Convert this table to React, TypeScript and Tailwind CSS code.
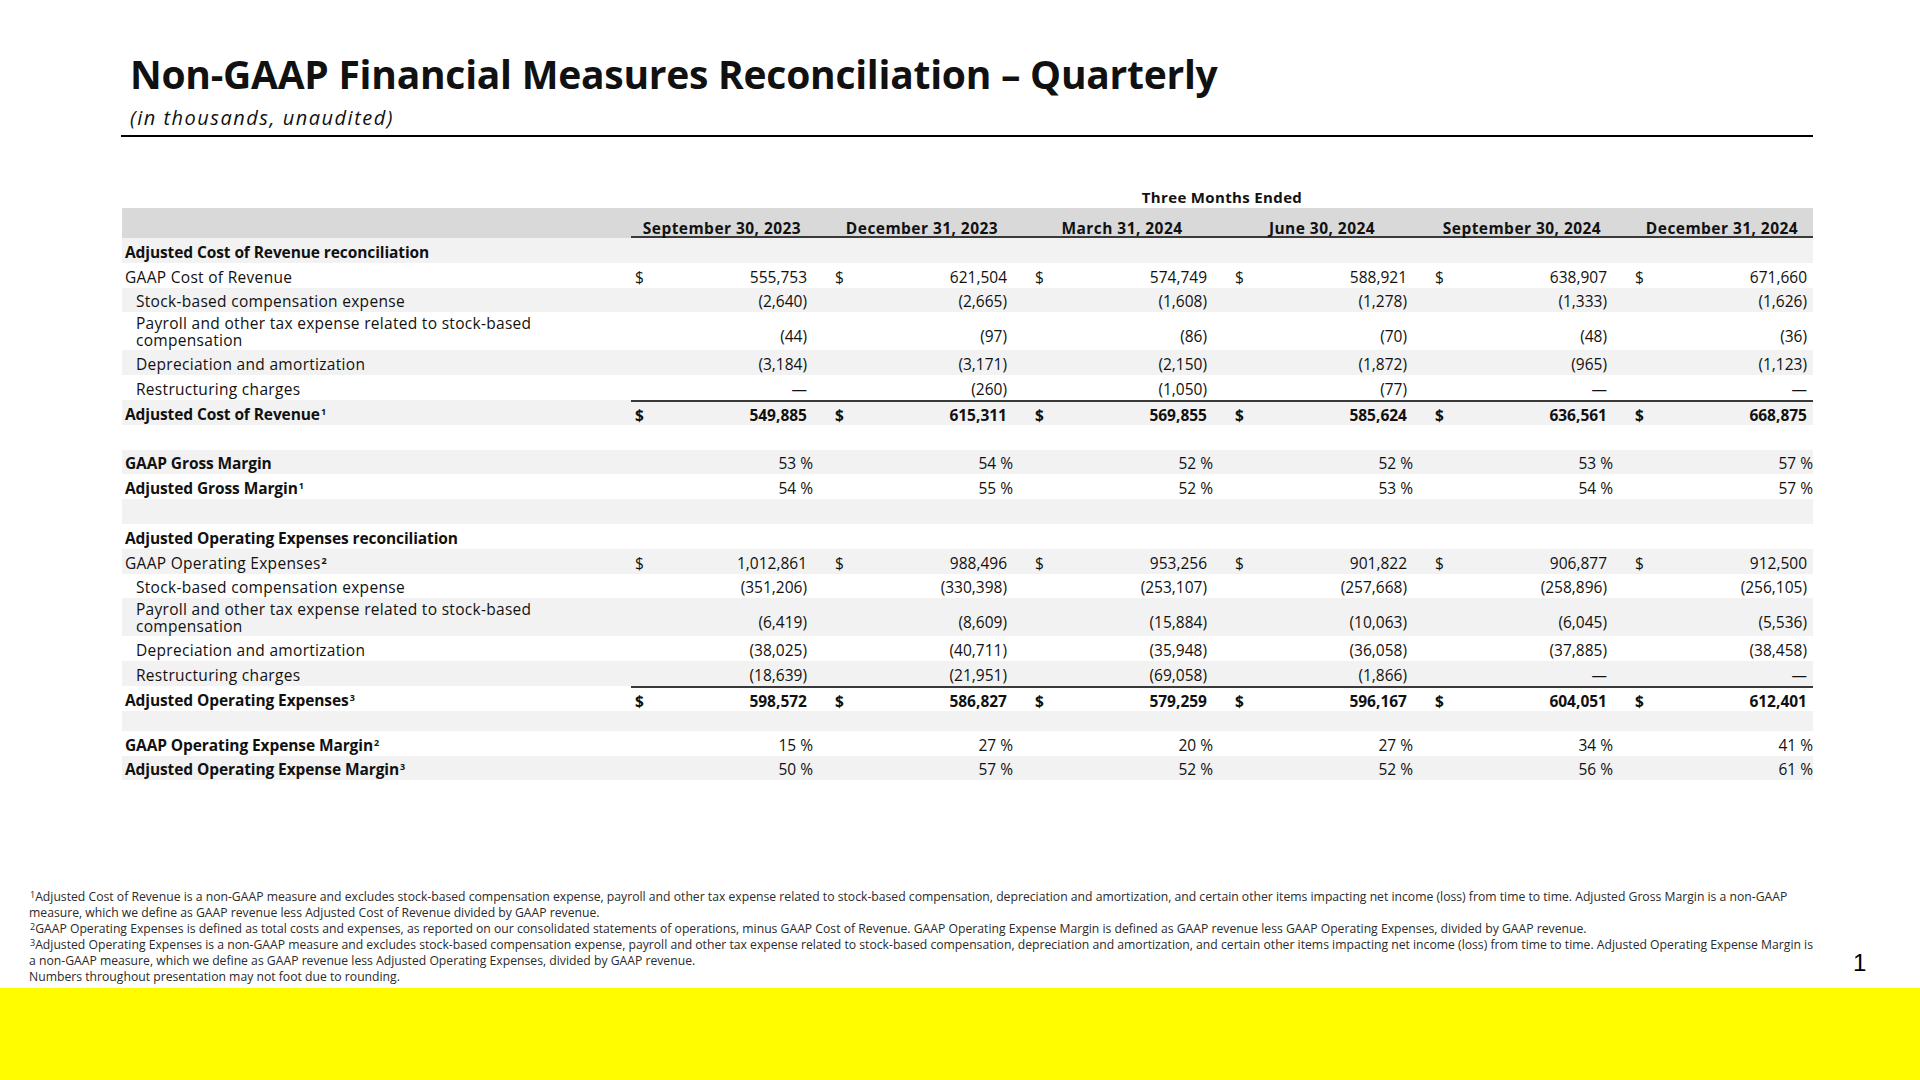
import React from "react";

type Row = {
  label?: string;
  sup?: string;
  indent?: boolean;
  bold?: boolean;
  values?: string[];
  dollar?: boolean;
  pct?: boolean;
  wrap?: boolean;
  total?: boolean;
  short?: boolean;
};

const COLUMNS = [
  "September 30, 2023",
  "December 31, 2023",
  "March 31, 2024",
  "June 30, 2024",
  "September 30, 2024",
  "December 31, 2024",
];

const ROWS: Row[] = [
  { label: "Adjusted Cost of Revenue reconciliation", bold: true },
  { label: "GAAP Cost of Revenue", dollar: true, values: ["555,753", "621,504", "574,749", "588,921", "638,907", "671,660"] },
  { label: "Stock-based compensation expense", indent: true, values: ["(2,640)", "(2,665)", "(1,608)", "(1,278)", "(1,333)", "(1,626)"] },
  { label: "Payroll and other tax expense related to stock-based", indent: true, wrap: true, values: ["(44)", "(97)", "(86)", "(70)", "(48)", "(36)"] },
  { label: "Depreciation and amortization", indent: true, values: ["(3,184)", "(3,171)", "(2,150)", "(1,872)", "(965)", "(1,123)"] },
  { label: "Restructuring charges", indent: true, values: ["—", "(260)", "(1,050)", "(77)", "—", "—"] },
  { label: "Adjusted Cost of Revenue", sup: "1", bold: true, total: true, dollar: true, values: ["549,885", "615,311", "569,855", "585,624", "636,561", "668,875"] },
  {},
  { label: "GAAP Gross Margin", bold: true, pct: true, values: ["53", "54", "52", "52", "53", "57"] },
  { label: "Adjusted Gross Margin", sup: "1", bold: true, pct: true, values: ["54", "55", "52", "53", "54", "57"] },
  {},
  { label: "Adjusted Operating Expenses reconciliation", bold: true },
  { label: "GAAP Operating Expenses", sup: "2", dollar: true, values: ["1,012,861", "988,496", "953,256", "901,822", "906,877", "912,500"] },
  { label: "Stock-based compensation expense", indent: true, values: ["(351,206)", "(330,398)", "(253,107)", "(257,668)", "(258,896)", "(256,105)"] },
  { label: "Payroll and other tax expense related to stock-based", indent: true, wrap: true, values: ["(6,419)", "(8,609)", "(15,884)", "(10,063)", "(6,045)", "(5,536)"] },
  { label: "Depreciation and amortization", indent: true, values: ["(38,025)", "(40,711)", "(35,948)", "(36,058)", "(37,885)", "(38,458)"] },
  { label: "Restructuring charges", indent: true, values: ["(18,639)", "(21,951)", "(69,058)", "(1,866)", "—", "—"] },
  { label: "Adjusted Operating Expenses", sup: "3", bold: true, total: true, dollar: true, values: ["598,572", "586,827", "579,259", "596,167", "604,051", "612,401"] },
  { short: true },
  { label: "GAAP Operating Expense Margin", sup: "2", bold: true, pct: true, values: ["15", "27", "20", "27", "34", "41"] },
  { label: "Adjusted Operating Expense Margin", sup: "3", bold: true, pct: true, values: ["50", "57", "52", "52", "56", "61"] },
];

function Sup({ n, bold = true }: { n: string; bold?: boolean }) {
  return (
    <span className={`inline-block align-top text-[9px] leading-[9px] ml-[1px] mt-[1px] ${bold ? "font-bold" : ""}`}>
      {n}
    </span>
  );
}

function TableRow({ row, index }: { row: Row; index: number }) {
  const gray = index % 2 === 0;
  const height = row.wrap ? "h-[38px]" : row.short ? "h-[20px]" : "h-[24.8px]";
  return (
    <div className={`flex ${height} ${gray ? "bg-[#f2f2f2]" : "bg-white"}`}>
      {row.wrap ? (
        <div className="w-[509px] shrink-0 flex flex-col pt-[3px] pl-[14px] tracking-[0.3px]">
          <div className="h-[17px] leading-[17px] overflow-visible">{row.label}</div>
          <div className="h-[17px] leading-[17px] overflow-visible">compensation</div>
        </div>
      ) : (
        <div
          className={`w-[509px] shrink-0 flex items-center pt-[4px] ${row.indent ? "pl-[14px]" : "pl-[3px]"} leading-[17px]`}
        >
          {row.label && (
            <span className={row.bold ? "font-bold tracking-[-0.1px]" : "tracking-[0.3px]"}>
              {row.label}
              {row.sup && <Sup n={row.sup} />}
            </span>
          )}
        </div>
      )}
      {row.values && (
        <div className={`flex flex-1 ${row.total ? "border-t-2 border-[#3a3a3a] font-bold" : ""}`}>
          {row.values.map((v, i) => (
            <div
              key={i}
              className={`${i === 0 ? "w-[182px]" : "w-[200px] pl-[18px]"} flex ${row.wrap ? "items-end pb-[2px]" : "items-center pt-[4px]"}`}
            >
              <div className="flex w-full items-center">
                <span className="w-[20px] pl-[4px]">{row.dollar ? "$" : ""}</span>
                {row.pct ? (
                  <span className="flex-1 text-right">{v} %</span>
                ) : (
                  <span className="flex-1 text-right pr-[6px]">{v}</span>
                )}
              </div>
            </div>
          ))}
        </div>
      )}
    </div>
  );
}

export default function App() {
  return (
    <div className="w-[1920px] h-[1080px] bg-white flex flex-col text-[#111] font-['Open_Sans','Noto_Sans',sans-serif] overflow-hidden">
      <div className="ml-[121px] w-[1692px] mt-[50px] border-b-2 border-black pb-[5px]">
        <h1 className="pl-[9px] text-[39px] leading-[48px] font-bold tracking-[-0.25px]">
          Non-GAAP Financial Measures Reconciliation – Quarterly
        </h1>
        <p className="pl-[9px] mt-[8px] text-[20px] leading-[24px] italic tracking-[1.5px]">(in thousands, unaudited)</p>
      </div>

      <div className="ml-[122px] w-[1691px] mt-[50px] text-[15.5px]">
        <div className="flex h-[21px] items-start">
          <div className="w-[509px] shrink-0" />
          <div className="flex-1 text-center font-bold text-[15px] leading-[20px] tracking-[0.35px]">Three Months Ended</div>
        </div>
        <div className="flex h-[30px] bg-[#d9d9d9] font-bold">
          <div className="w-[509px] shrink-0" />
          <div className="flex flex-1 border-b-2 border-[#3a3a3a]">
            {COLUMNS.map((c, i) => (
              <div key={c} className={`${i === 0 ? "w-[182px]" : "w-[200px] pl-[18px]"} flex`}>
                <div className="w-full flex items-end justify-center leading-[16px] tracking-[0.45px]">{c}</div>
              </div>
            ))}
          </div>
        </div>
        {ROWS.map((row, i) => (
          <TableRow key={i} row={row} index={i} />
        ))}
      </div>

      <div className="mt-[109px] flex">
        <div className="ml-[29px] w-[1800px] text-[12.2px] leading-[16px] text-[#2a2a2a]">
          <div className="whitespace-nowrap">
            <Sup n="1" bold={false} />
            Adjusted Cost of Revenue is a non-GAAP measure and excludes stock-based compensation expense, payroll and other tax expense related to stock-based compensation, depreciation and amortization, and certain other items impacting net income (loss) from time to time. Adjusted Gross Margin is a non-GAAP
          </div>
          <div className="whitespace-nowrap">measure, which we define as GAAP revenue less Adjusted Cost of Revenue divided by GAAP revenue.</div>
          <div className="whitespace-nowrap">
            <Sup n="2" bold={false} />
            GAAP Operating Expenses is defined as total costs and expenses, as reported on our consolidated statements of operations, minus GAAP Cost of Revenue. GAAP Operating Expense Margin is defined as GAAP revenue less GAAP Operating Expenses, divided by GAAP revenue.
          </div>
          <div className="whitespace-nowrap">
            <Sup n="3" bold={false} />
            Adjusted Operating Expenses is a non-GAAP measure and excludes stock-based compensation expense, payroll and other tax expense related to stock-based compensation, depreciation and amortization, and certain other items impacting net income (loss) from time to time. Adjusted Operating Expense Margin is
          </div>
          <div className="whitespace-nowrap">a non-GAAP measure, which we define as GAAP revenue less Adjusted Operating Expenses, divided by GAAP revenue.</div>
          <div className="whitespace-nowrap">Numbers throughout presentation may not foot due to rounding.</div>
        </div>
        <div className="ml-[24px] mt-[60px] text-[24px] leading-[28px] font-['Liberation_Sans',sans-serif] text-black">1</div>
      </div>

      <div className="mt-auto h-[92px] bg-[#fffc00]" />
    </div>
  );
}
